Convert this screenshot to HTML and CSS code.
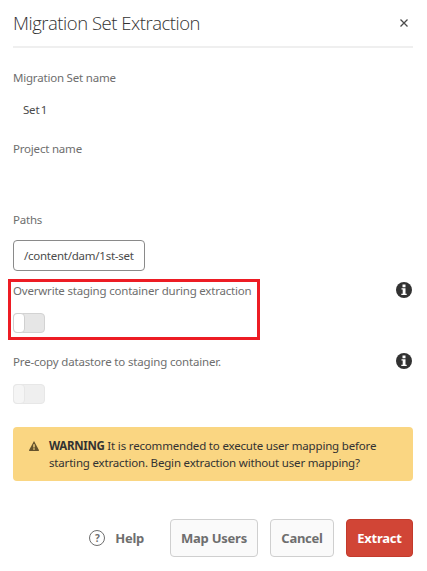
FILE: index.html
```html
<!DOCTYPE html>
<html lang="en">
<head>
<meta charset="utf-8">
<title>Migration Set Extraction</title>
<link rel="stylesheet" href="styles.css">
</head>
<body>
<main class="dialog">
  <header class="header">
    <h1 class="title">Migration Set Extraction</h1>
    <button class="close" aria-label="Close"><svg width="8" height="8" viewBox="0 0 8 8"><path d="M.5.5 7.5 7.5M7.5.5.5 7.5" fill="none" stroke="#4b4b4b" stroke-width="1.3"/></svg></button>
  </header>
  <section class="field">
    <div class="label"><span>Migration Set name</span></div>
    <div class="value">Set 1</div>
  </section>
  <section class="field">
    <div class="label"><span>Project name</span></div>
  </section>
  <section class="field">
    <div class="label"><span>Paths</span></div>
    <div class="chip">/content/dam/1st-set</div>
  </section>
  <section class="field highlighted">
    <div class="label"><span>Overwrite staging container during extraction</span>
      <svg class="info" width="16" height="16" viewBox="0 0 16 16"><circle cx="8" cy="8" r="8" fill="#323232"/><path d="M6.5 2.5h3v2.7h-3zM5.5 6.3h4v5.4h1.2V13H5.3v-1.3h1.4V7.6H5.5z" fill="#fff"/></svg>
    </div>
    <div class="toggle"><i class="knob"></i></div>
  </section>
  <section class="field">
    <div class="label"><span class="precopy">Pre-copy datastore to staging container.</span>
      <svg class="info" width="16" height="16" viewBox="0 0 16 16"><circle cx="8" cy="8" r="8" fill="#323232"/><path d="M6.5 2.5h3v2.7h-3zM5.5 6.3h4v5.4h1.2V13H5.3v-1.3h1.4V7.6H5.5z" fill="#fff"/></svg>
    </div>
    <div class="toggle disabled"><i class="knob"></i></div>
  </section>
  <section class="alert">
    <svg class="warn" width="10" height="10" viewBox="0 0 10 10"><path d="M5 0 10 9.2Q10 10 9.4 10H.6Q0 10 0 9.2z" fill="#64522c"/><path d="M4.3 3.2h1.4v3.2H4.3zM4.3 7.3h1.4v1.4H4.3z" fill="#fad682"/></svg>
    <p class="message"><b class="strong">WARNING</b> It is recommended to execute user mapping before<br>starting extraction. Begin extraction without user mapping?</p>
  </section>
  <footer class="actions">
    <a class="help"><span class="help-icon">?</span><span>Help</span></a>
    <button class="button map">Map Users</button>
    <button class="button cancel">Cancel</button>
    <button class="button extract">Extract</button>
  </footer>
</main>
</body>
</html>
```
FILE: styles.css
```css
*, *::before { box-sizing: border-box; }
body { margin: 0; background: #fff; font-family: "Noto Sans", "Open Sans", sans-serif; font-size: 11.5px; color: #6e6e6e; letter-spacing: -.2px; }
.dialog { height: 571px; padding: 0 14px 0 13px; overflow: hidden; white-space: nowrap; }
.header { display: flex; align-items: center; justify-content: space-between; height: 48px; border-bottom: 2px solid #efefef; padding-right: 5px; }
.title { margin: 0; font: 300 18.5px/24px "Open Sans", sans-serif; color: #323232; letter-spacing: -.48px; }
.close { display: flex; padding: 0; border: 0; background: none; }
.header + .field { margin-top: 20px; }
.field { height: 71px; }
.label { display: flex; justify-content: space-between; height: 18px; line-height: 20px; }
.precopy { letter-spacing: -.17px; }
.info { margin: 1px 1px 0 0; }
.value { margin: 15px 0 0 10px; line-height: 18px; color: #4b4b4b; word-spacing: -1.5px; }
.chip { display: flex; align-items: center; width: 132px; height: 31px; margin-top: 12px; padding: 0 0 0 10px; border: 1px solid #8a8a8a; border-radius: 4px; color: #4b4b4b; letter-spacing: -.25px; }
.highlighted { position: relative; }
.highlighted::before { content: ""; position: absolute; left: -5px; top: -2px; width: 252px; height: 61px; border: 3px solid #ed1c24; }
.toggle { width: 32px; height: 20px; margin-top: 14px; background: #e6e6e6; border: 1px solid #d3d3d3; border-radius: 4px; }
.knob { display: block; width: 12px; height: 20px; margin: -1px; background: #fff; border: 1px solid #d0d0d0; border-radius: 4px; }
.disabled { background: #efefef; border-color: #e7e7e7; }
.disabled .knob { background: #f5f5f5; border-color: #e7e7e7; }
.alert { display: flex; width: 400px; height: 54px; margin-top: 4px; padding: 10px 16px; background: #fad682; border-radius: 4px; color: #323232; }
.warn { flex: none; margin: 4px 10px 0 0; }
.message { margin: 0; line-height: 17px; letter-spacing: -.18px; }
.strong { letter-spacing: -.3px; }
.actions { display: flex; align-items: center; justify-content: flex-end; gap: 12px; height: 38px; margin-top: 38px; font-weight: 700; font-size: 13px; letter-spacing: -.25px; }
.help { display: flex; align-items: center; margin-right: 14px; }
.help-icon { width: 16px; height: 16px; margin-right: 10px; border: 1px solid #6e6e6e; border-radius: 50%; font-size: 10px; line-height: 14px; text-align: center; }
.button { height: 38px; padding: 0; border: 1px solid #cfcfcf; border-radius: 4px; background: #fafafa; color: #6e6e6e; font: inherit; letter-spacing: inherit; }
.map { width: 88px; }
.cancel { width: 64px; }
.extract { width: 67px; background: #d14536; border-color: #c33a2c; color: #fff; }
```
